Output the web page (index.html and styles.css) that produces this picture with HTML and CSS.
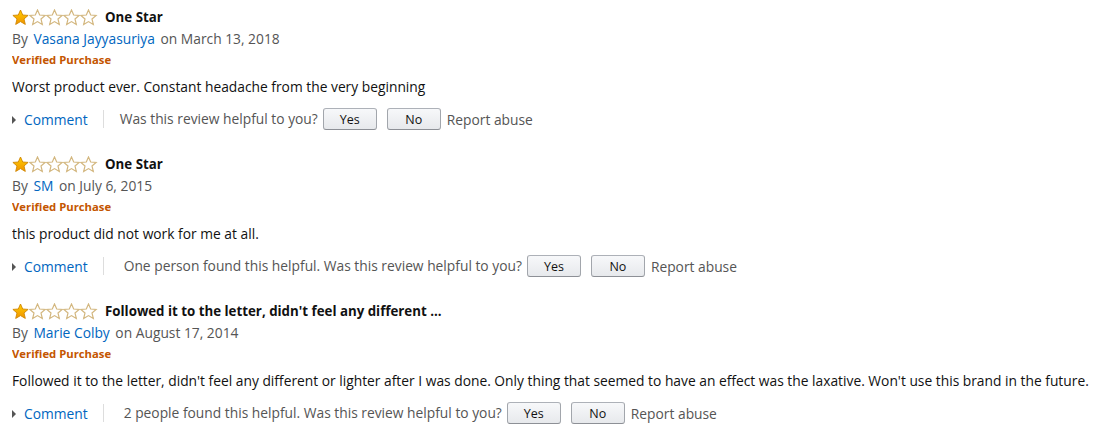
FILE: index.html
```html
<!DOCTYPE html>
<html lang="en">
<head>
    <meta charset="UTF-8">
    <title>Customer Reviews</title>
    <link rel="stylesheet" href="styles.css">
</head>
<body>
    <svg width="0" height="0" class="defs">
        <defs>
            <linearGradient id="gold" x1="0" y1="0" x2="0" y2="1">
                <stop offset="0" stop-color="#ffce00"/>
                <stop offset="1" stop-color="#f09300"/>
            </linearGradient>
            <path id="star" d="M8.5 1 L10.7 6 L16.1 6.4 L12 10 L13.3 15.4 L8.5 12.6 L3.7 15.4 L5 10 L0.9 6.4 L6.3 6 Z"/>
        </defs>
    </svg>

    <div class="review">
        <div class="review-head">
            <svg class="stars" width="86" height="17" viewBox="0 0 86 17">
                <use href="#star" class="full"/>
                <use href="#star" x="17" class="empty"/>
                <use href="#star" x="34" class="empty"/>
                <use href="#star" x="51" class="empty"/>
                <use href="#star" x="68" class="empty"/>
            </svg>
            <span class="title">One Star</span>
        </div>
        <div class="byline">By <a href="#">Vasana Jayyasuriya</a> on March 13, 2018</div>
        <div class="verified">Verified Purchase</div>
        <p class="body">Worst product ever. Constant headache from the very beginning</p>
        <div class="actions">
            <a href="#" class="comment">Comment</a>
            <span class="helpful">Was this review helpful to you?</span>
            <button>Yes</button>
            <button>No</button>
            <a href="#" class="report">Report abuse</a>
        </div>
    </div>

    <div class="review">
        <div class="review-head">
            <svg class="stars" width="86" height="17" viewBox="0 0 86 17">
                <use href="#star" class="full"/>
                <use href="#star" x="17" class="empty"/>
                <use href="#star" x="34" class="empty"/>
                <use href="#star" x="51" class="empty"/>
                <use href="#star" x="68" class="empty"/>
            </svg>
            <span class="title">One Star</span>
        </div>
        <div class="byline">By <a href="#">SM</a> on July 6, 2015</div>
        <div class="verified">Verified Purchase</div>
        <p class="body">this product did not work for me at all.</p>
        <div class="actions">
            <a href="#" class="comment">Comment</a>
            <span class="helpful counted">One person found this helpful. Was this review helpful to you?</span>
            <button>Yes</button>
            <button>No</button>
            <a href="#" class="report">Report abuse</a>
        </div>
    </div>

    <div class="review">
        <div class="review-head">
            <svg class="stars" width="86" height="17" viewBox="0 0 86 17">
                <use href="#star" class="full"/>
                <use href="#star" x="17" class="empty"/>
                <use href="#star" x="34" class="empty"/>
                <use href="#star" x="51" class="empty"/>
                <use href="#star" x="68" class="empty"/>
            </svg>
            <span class="title">Followed it to the letter, didn't feel any different ...</span>
        </div>
        <div class="byline">By <a href="#">Marie Colby</a> on August 17, 2014</div>
        <div class="verified">Verified Purchase</div>
        <p class="body">Followed it to the letter, didn't feel any different or lighter after I was done. Only thing that seemed to have an effect was the laxative. Won't use this brand in the future.</p>
        <div class="actions">
            <a href="#" class="comment">Comment</a>
            <span class="helpful counted">2 people found this helpful. Was this review helpful to you?</span>
            <button>Yes</button>
            <button>No</button>
            <a href="#" class="report">Report abuse</a>
        </div>
    </div>
</body>
</html>
```

FILE: styles.css
```css
body {
    font-family: "Open Sans", Arial, sans-serif;
    font-size: 13.8px;
    color: #111;
    margin: 6px 12px;
    background: #fff;
}
a {
    color: #0066c0;
    text-decoration: none;
}
.defs {
    position: absolute;
}
.review {
    margin-bottom: 23px;
}
.review-head {
    display: flex;
    align-items: center;
    height: 22px;
    gap: 7px;
}
.stars .full {
    fill: url(#gold);
    stroke: #d08600;
    stroke-width: 0.9;
}
.stars .empty {
    fill: #fff;
    stroke: #d3b77f;
    stroke-width: 1.2;
}
.title {
    font-size: 13.3px;
    font-weight: bold;
}
.byline {
    margin-top: 1px;
    line-height: 20px;
    color: #555;
    white-space: nowrap;
}
.byline a {
    margin: 0 2px;
}
.verified {
    margin-top: 2px;
    line-height: 18px;
    font-size: 11.3px;
    font-weight: bold;
    color: #c45500;
}
.body {
    margin: 8px 0 0;
    line-height: 20px;
    white-space: nowrap;
}
.actions {
    margin-top: 11px;
    display: flex;
    align-items: center;
    height: 22px;
    color: #555;
    white-space: nowrap;
}
.comment {
    position: relative;
    padding-left: 12px;
}
.comment::before {
    content: "";
    position: absolute;
    left: 0;
    top: 6px;
    border-left: 4px solid #555;
    border-top: 4px solid transparent;
    border-bottom: 4px solid transparent;
}
.helpful {
    margin-left: 15px;
    padding-left: 16px;
    border-left: 1px solid #ddd;
    margin-right: 5px;
    line-height: 18px;
}
.helpful.counted {
    padding-left: 20px;
}
button {
    font-family: inherit;
    font-size: 12.5px;
    color: #111;
    width: 54px;
    height: 22px;
    margin-right: 10px;
    padding: 0;
    border: 1px solid #adb1b8;
    border-color: #adb1b8 #a2a6ac #8d9096;
    border-radius: 3px;
    background: linear-gradient(#f7f8fa, #e7e9ec);
    cursor: pointer;
}
button + button {
    margin-right: 6px;
}
.report {
    color: #555;
}
```
